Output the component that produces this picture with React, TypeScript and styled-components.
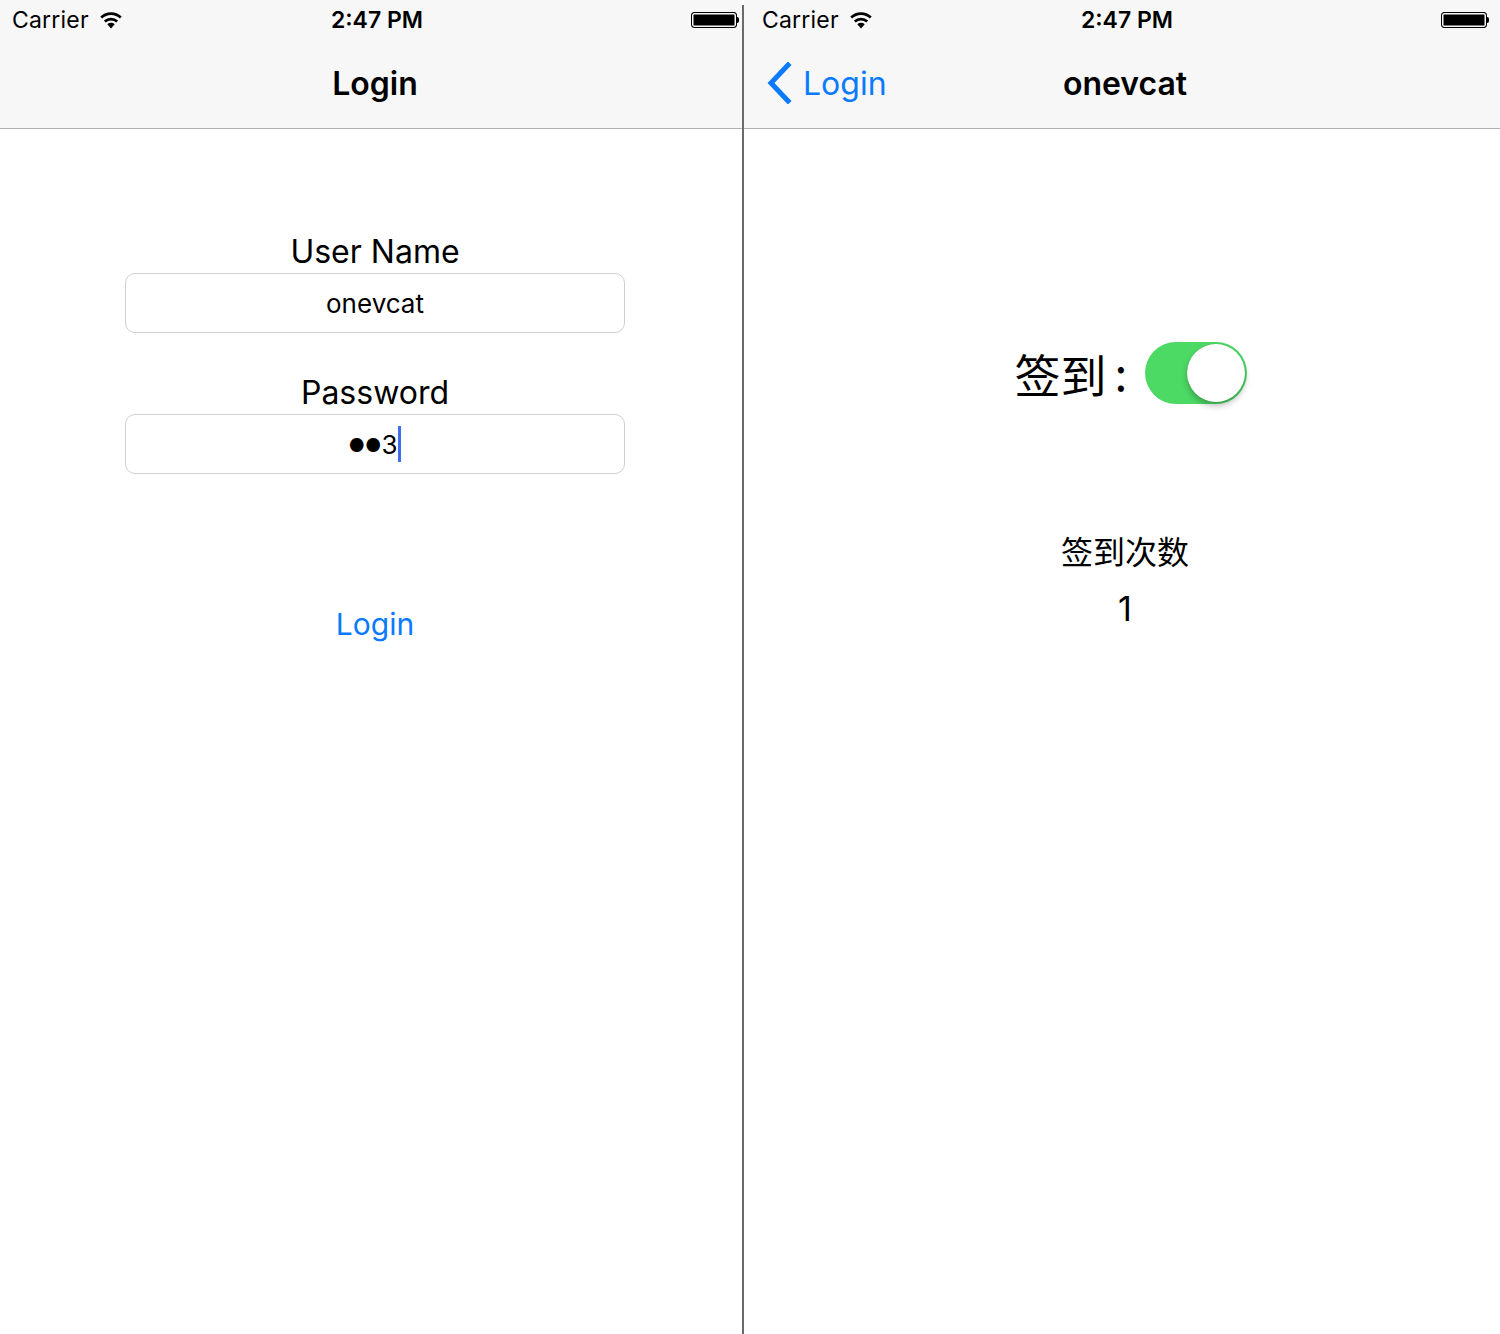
import React from "react";
import styled, { createGlobalStyle } from "styled-components";

const GlobalStyle = createGlobalStyle`
   html, body {
      margin: 0;
      padding: 0;
      background: #ffffff;
      font-family: "Inter", "Noto Sans", "Noto Sans CJK SC", sans-serif;
      color: #000;
   }
`;

const Screen = styled.div`
   display: grid;
   grid-template-columns: 742px 2px 756px;
   width: 1500px;
   height: 1334px;
   overflow: hidden;
`;

const Panel = styled.div`
   overflow: hidden;
`;

const Divider = styled.div`
   margin-top: 5px;
   background: #6a6a6a;
`;

const Phone = styled.div<{ $inset: number }>`
   display: flex;
   flex-direction: column;
   width: ${(p) => 750 + p.$inset}px;
   height: 1334px;

   & > * {
      padding-left: ${(p) => p.$inset}px;
   }
`;

const Bars = styled.div`
   background: #f7f7f7;
   border-bottom: 1.5px solid #b0b0b0;
`;

const StatusBar = styled.div`
   height: 40px;
   display: grid;
   grid-template-columns: 1fr auto 1fr;
   align-items: center;
   padding: 0 12px;
   font-size: 23px;
`;

const Carrier = styled.div`
   display: flex;
   align-items: center;
   gap: 10px;
   letter-spacing: 0.2px;
`;

const Time = styled.div`
   font-weight: 600;
   font-size: 23px;
   margin-left: 4px;
`;

const Battery = styled.div`
   justify-self: end;
   display: flex;
   align-items: center;
   margin-right: -1px;
   &::before {
      content: "";
      width: 44px;
      height: 14px;
      border: 1.5px solid #000;
      border-radius: 3px;
      background: #000;
      box-shadow: inset 0 0 0 1.5px #f7f7f7;
   }
   &::after {
      content: "";
      width: 2px;
      height: 6px;
      background: #000;
      border-radius: 0 2px 2px 0;
   }
`;

const NavBar = styled.div`
   height: 88px;
   box-sizing: border-box;
   display: grid;
   grid-template-columns: 1fr auto 1fr;
   align-items: center;
   padding: 0 12px 2px;
`;

const NavTitle = styled.div`
   font-size: 32px;
   font-weight: 600;
   grid-column: 2;
`;

const Back = styled.div`
   grid-column: 1;
   display: flex;
   align-items: center;
   gap: 11px;
   color: #0a7aff;
   font-size: 32px;
   margin-left: 4px;
`;

const Form = styled.div`
   display: flex;
   flex-direction: column;
   align-items: center;
   padding-top: 102px;
`;

const Label = styled.div`
   font-size: 32px;
   line-height: 42px;
`;

const Field = styled.div`
   width: 500px;
   height: 60px;
   box-sizing: border-box;
   border: 1.5px solid #cfcfcf;
   border-radius: 10px;
   display: flex;
   align-items: center;
   justify-content: center;
   font-size: 26px;
   margin-bottom: 39px;
`;

const Caret = styled.span`
   display: inline-block;
   width: 3px;
   height: 36px;
   background: #3f6cf0;
   margin-left: 1px;
`;

const Dots = styled.span`
   font-size: 18px;
   letter-spacing: 0;
   margin-top: 3px;
`;

const LinkButton = styled.div`
   color: #0a7aff;
   font-size: 30px;
   margin-top: 93px;
`;

const Content = styled.div`
   display: flex;
   flex-direction: column;
   align-items: center;
`;

const SignRow = styled.div`
   display: flex;
   align-items: center;
   gap: 18px;
   margin-top: 211px;
   margin-left: 12px;
`;

const SignLabel = styled.div`
   font-size: 46px;
   font-family: "Noto Sans CJK SC", sans-serif;
   display: flex;
   align-items: center;
   gap: 8px;
`;

const Colon = styled.span`
   margin-top: -4px;
`;

const Switch = styled.div<{ $on: boolean }>`
   position: relative;
   width: 102px;
   height: 62px;
   border-radius: 31px;
   background: ${(p) => (p.$on ? "#4cd964" : "#e5e5e5")};
   &::after {
      content: "";
      position: absolute;
      top: 2px;
      left: ${(p) => (p.$on ? "42px" : "2px")};
      width: 58px;
      height: 58px;
      border-radius: 50%;
      background: #fff;
      box-shadow: 0 4px 6px rgba(0, 0, 0, 0.25), 0 0 1px rgba(0, 0, 0, 0.2);
   }
`;

const CountLabel = styled.div`
   font-size: 32px;
   font-family: "Noto Sans CJK SC", sans-serif;
   margin-top: 121px;
`;

const Count = styled.div`
   font-size: 34px;
   margin-top: 15px;
`;

const Wifi = () => (
   <svg width="24" height="18" viewBox="0 0 24 18">
      <path d="M12 17.5 L8.3 13.3 A5.5 5.5 0 0 1 15.7 13.3 Z" fill="#000" />
      <path d="M4.9 9.6 A10.3 10.3 0 0 1 19.1 9.6 L17.3 11.6 A7.6 7.6 0 0 0 6.7 11.6 Z" fill="#000" />
      <path d="M1.3 5.6 A15.4 15.4 0 0 1 22.7 5.6 L20.9 7.6 A12.7 12.7 0 0 0 3.1 7.6 Z" fill="#000" />
   </svg>
);

const Chevron = () => (
   <svg width="26" height="42" viewBox="0 0 26 42">
      <path d="M22 3 L5 21 L22 39" fill="none" stroke="#0a7aff" strokeWidth="5" strokeLinecap="square" />
   </svg>
);

const Status = () => (
   <StatusBar>
      <Carrier>
         Carrier <Wifi />
      </Carrier>
      <Time>2:47 PM</Time>
      <Battery />
   </StatusBar>
);

const App = () => {
   return (
      <>
         <GlobalStyle />
         <Screen>
            <Panel>
               <Phone $inset={0}>
                  <Bars>
                     <Status />
                     <NavBar>
                        <NavTitle>Login</NavTitle>
                     </NavBar>
                  </Bars>
                  <Form>
                     <Label>User Name</Label>
                     <Field>onevcat</Field>
                     <Label>Password</Label>
                     <Field>
                        <Dots>●●</Dots>3<Caret />
                     </Field>
                     <LinkButton>Login</LinkButton>
                  </Form>
               </Phone>
            </Panel>
            <Divider />
            <Panel>
               <Phone $inset={6}>
                  <Bars>
                     <Status />
                     <NavBar>
                        <Back>
                           <Chevron />
                           Login
                        </Back>
                        <NavTitle>onevcat</NavTitle>
                     </NavBar>
                  </Bars>
                  <Content>
                     <SignRow>
                        <SignLabel>
                           签到<Colon>:</Colon>
                        </SignLabel>
                        <Switch $on={true} />
                     </SignRow>
                     <CountLabel>签到次数</CountLabel>
                     <Count>1</Count>
                  </Content>
               </Phone>
            </Panel>
         </Screen>
      </>
   );
};

export default App;
